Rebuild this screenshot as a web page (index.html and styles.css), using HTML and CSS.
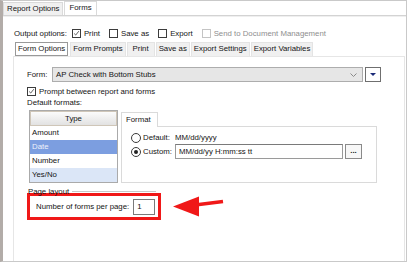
FILE: index.html
```html
<!DOCTYPE html>
<html lang="en">
<head>
    <meta charset="UTF-8">
    <title>Forms - Report Options</title>
    <link rel="stylesheet" href="styles.css">
</head>
<body>
    <div class="window">
        <!-- Top level tabs -->
        <div class="top-tabs">
            <div class="top-tab">Report Options</div>
            <div class="top-tab active">Forms</div>
        </div>

        <div class="forms-page">
            <div class="output-row">
                <span class="output-label">Output options:</span>
                <span class="option"><span class="check checked"><svg viewBox="0 0 9 9"><path d="M1.5 4.5 L3.5 6.5 L7.5 1.5"/></svg></span>Print</span>
                <span class="option"><span class="check"></span>Save as</span>
                <span class="option"><span class="check"></span>Export</span>
                <span class="option disabled"><span class="check"></span>Send to Document Management</span>
            </div>

            <div class="sub-tabs">
                <div class="sub-tab active">Form Options</div>
                <div class="sub-tab">Form Prompts</div>
                <div class="sub-tab wide">Print</div>
                <div class="sub-tab">Save as</div>
                <div class="sub-tab">Export Settings</div>
                <div class="sub-tab">Export Variables</div>
            </div>

            <div class="sub-panel">
                <div class="form-row">
                    <span class="form-label">Form:</span>
                    <div class="select">
                        <span>AP Check with Bottom Stubs</span>
                        <svg class="chevron" viewBox="0 0 7 4"><path d="M0.5 0.5 L3.5 3.5 L6.5 0.5"/></svg>
                    </div>
                    <div class="drop-btn"><span class="triangle"></span></div>
                </div>

                <div class="check-row">
                    <span class="check checked"><svg viewBox="0 0 9 9"><path d="M1.5 4.5 L3.5 6.5 L7.5 1.5"/></svg></span>
                    Prompt between report and forms
                </div>

                <div class="section-label">Default formats:</div>

                <div class="formats">
                    <div class="type-list">
                        <div class="type-head">Type</div>
                        <div class="type-row">Amount</div>
                        <div class="type-row selected">Date</div>
                        <div class="type-row">Number</div>
                        <div class="type-row alt">Yes/No</div>
                    </div>

                    <div class="format-box">
                        <div class="format-tab">Format</div>
                        <div class="format-body">
                            <div class="radio-row">
                                <span class="radio"></span>
                                <span class="radio-label">Default:</span>
                                <span>MM/dd/yyyy</span>
                            </div>
                            <div class="radio-row">
                                <span class="radio on"></span>
                                <span class="radio-label">Custom:</span>
                                <div class="text-box">MM/dd/yy H:mm:ss tt</div>
                                <div class="dots-btn">...</div>
                            </div>
                        </div>
                    </div>
                </div>

                <div class="group-title">Page layout<span class="group-line"></span></div>
                <div class="highlight">
                    Number of forms per page:
                    <div class="num-box">1</div>
                </div>
            </div>
        </div>

        <!-- Red annotation arrow -->
        <svg class="arrow" width="60" height="30" viewBox="0 0 60 30">
            <path class="arrow-shaft" d="M24 12 L52 8.5"/>
            <path class="arrow-head" d="M2 13.5 L28 3.5 L28 23.5 Z"/>
        </svg>
    </div>
</body>
</html>
```

FILE: styles.css
```css
* {
    box-sizing: border-box;
}

body {
    margin: 0;
    font-family: "Liberation Sans", Arial, sans-serif;
    font-size: 7.8px;
    color: #141414;
    background-color: #fff;
}

.window {
    position: relative;
    width: 407px;
    height: 262px;
    display: flex;
    flex-direction: column;
    border: 1px solid #c9c9c9;
    border-left: 3px solid #b2aca8;
    overflow: hidden;
}

/* top tabs */
.top-tabs {
    display: flex;
    align-items: flex-end;
    height: 15px;
    border-bottom: 1px solid #d3d3d3;
}

.top-tab {
    height: 13px;
    line-height: 12px;
    padding: 0 3px;
    background-color: #f0f0f0;
    border: 1px solid #dadada;
    border-bottom: none;
}

.top-tab.active {
    height: 14px;
    margin-left: 1px;
    padding: 0 4px;
    background-color: #fff;
}

.forms-page {
    flex: 1;
    display: flex;
    flex-direction: column;
    border-top: 1px solid #efefef;
}

/* output options */
.output-row {
    display: flex;
    align-items: center;
    height: 11px;
    margin: 11px 0 0 11px;
}

.output-label {
    margin-right: 5px;
}

.option {
    display: flex;
    align-items: center;
    margin-right: 9px;
}

.option.disabled {
    color: #8e8e8e;
}

.option.disabled .check {
    border-color: #c4c4c4;
}

.check {
    width: 9px;
    height: 9px;
    margin-right: 3px;
    border: 1px solid #3c3c3c;
    background-color: #fff;
    flex-shrink: 0;
}

.check svg {
    display: block;
    width: 7px;
    height: 7px;
}

.check path {
    fill: none;
    stroke: #333;
    stroke-width: 1;
}

/* sub tabs */
.sub-tabs {
    display: flex;
    height: 14px;
    margin: 3px 0 0 12px;
}

.sub-tab {
    height: 14px;
    line-height: 12px;
    padding: 0 2px;
    margin-left: 1px;
    background-color: #f0f0f0;
    border: 1px solid #e4e4e4;
    border-bottom: none;
    text-align: center;
}

.sub-tab.active {
    margin-left: 0;
    margin-right: 1px;
    background-color: #fff;
    border: 1px solid #999;
}

.sub-tab.wide {
    min-width: 28px;
}

.sub-panel {
    flex: 1;
    margin: 0 1px 0 10px;
    padding: 10px 0 0 13px;
    border: 1px solid #e6e6e6;
    border-bottom: none;
}

/* form select */
.form-row {
    display: flex;
    align-items: center;
    height: 15px;
}

.form-label {
    width: 25px;
}

.select {
    width: 311px;
    height: 15px;
    display: flex;
    align-items: center;
    justify-content: space-between;
    padding: 0 5px 0 3px;
    background-color: #e6e6e6;
    border: 1px solid #adadad;
}

.chevron {
    width: 7px;
    height: 4px;
}

.chevron path {
    fill: none;
    stroke: #8a8a8a;
    stroke-width: 1;
}

.drop-btn {
    width: 16px;
    height: 15px;
    margin-left: 2px;
    display: flex;
    align-items: center;
    justify-content: center;
    background-color: #fff;
    border: 1px solid #6f6f6f;
}

.triangle {
    width: 0;
    height: 0;
    border-left: 3.5px solid transparent;
    border-right: 3.5px solid transparent;
    border-top: 3.5px solid #1b2a78;
}

.check-row {
    display: flex;
    align-items: center;
    height: 10px;
    margin-top: 4px;
}

.section-label {
    height: 10px;
    line-height: 10px;
    margin-top: 2px;
}

/* default formats */
.formats {
    display: flex;
    align-items: flex-start;
    margin: 2px 0 0 2px;
}

.type-list {
    width: 89px;
    border: 1px solid #aaa;
    background-color: #fff;
}

.type-head {
    height: 15px;
    line-height: 13px;
    text-align: center;
    background: linear-gradient(#fbfbfb, #e2e2e2);
    border: 1px solid #cfc6b8;
}

.type-row {
    height: 14px;
    line-height: 14px;
    padding-left: 2px;
}

.type-row.selected {
    background-color: #7c9ee0;
    color: #eef2fb;
}

.type-row.alt {
    background-color: #dbe6f7;
}

.format-box {
    width: 256px;
    margin: 2px 0 0 3px;
}

.format-tab {
    position: relative;
    width: 37px;
    height: 15px;
    line-height: 13px;
    padding-left: 4px;
    margin-bottom: -1px;
    background-color: #fff;
    border: 1px solid #dadada;
    border-bottom: none;
}

.format-body {
    height: 57px;
    padding: 5px 0 0 9px;
    border: 1px solid #dadada;
}

.radio-row {
    display: flex;
    align-items: center;
    height: 11px;
}

.radio-row + .radio-row {
    height: 15px;
    margin-top: 1px;
}

.radio {
    position: relative;
    width: 10px;
    height: 10px;
    margin-right: 2px;
    border: 1px solid #3a3a3a;
    border-radius: 50%;
    background-color: #fff;
}

.radio.on::after {
    content: "";
    position: absolute;
    left: 2px;
    top: 2px;
    width: 4px;
    height: 4px;
    border-radius: 50%;
    background-color: #222;
}

.radio-label {
    width: 32px;
}

.text-box {
    width: 168px;
    height: 15px;
    line-height: 13px;
    padding-left: 3px;
    border: 1px solid #9a9a9a;
    border-top-color: #7a7a7a;
    background-color: #fff;
}

.dots-btn {
    width: 17px;
    height: 15px;
    margin-left: 2px;
    line-height: 12px;
    text-align: center;
    font-weight: bold;
    background-color: #f7f7f7;
    border: 1px solid #8a8a8a;
}

/* page layout */
.group-title {
    display: flex;
    align-items: center;
    height: 10px;
    margin: 3px 0 0 1px;
}

.group-line {
    width: 84px;
    margin-left: 3px;
    border-top: 1px solid #c8c8c8;
}

.highlight {
    display: flex;
    align-items: center;
    width: 134px;
    height: 27px;
    margin-top: -3px;
    padding-left: 6px;
    border: 3px solid #f01818;
}

.num-box {
    width: 22px;
    height: 16px;
    line-height: 14px;
    margin-left: 4px;
    padding-left: 3px;
    background-color: #fff;
    border: 1px solid #7a7a7a;
}

/* annotation */
.arrow {
    position: absolute;
    left: 168px;
    top: 192px;
}

.arrow-shaft {
    fill: none;
    stroke: #f01818;
    stroke-width: 3.5;
}

.arrow-head {
    fill: #f01818;
}
```
